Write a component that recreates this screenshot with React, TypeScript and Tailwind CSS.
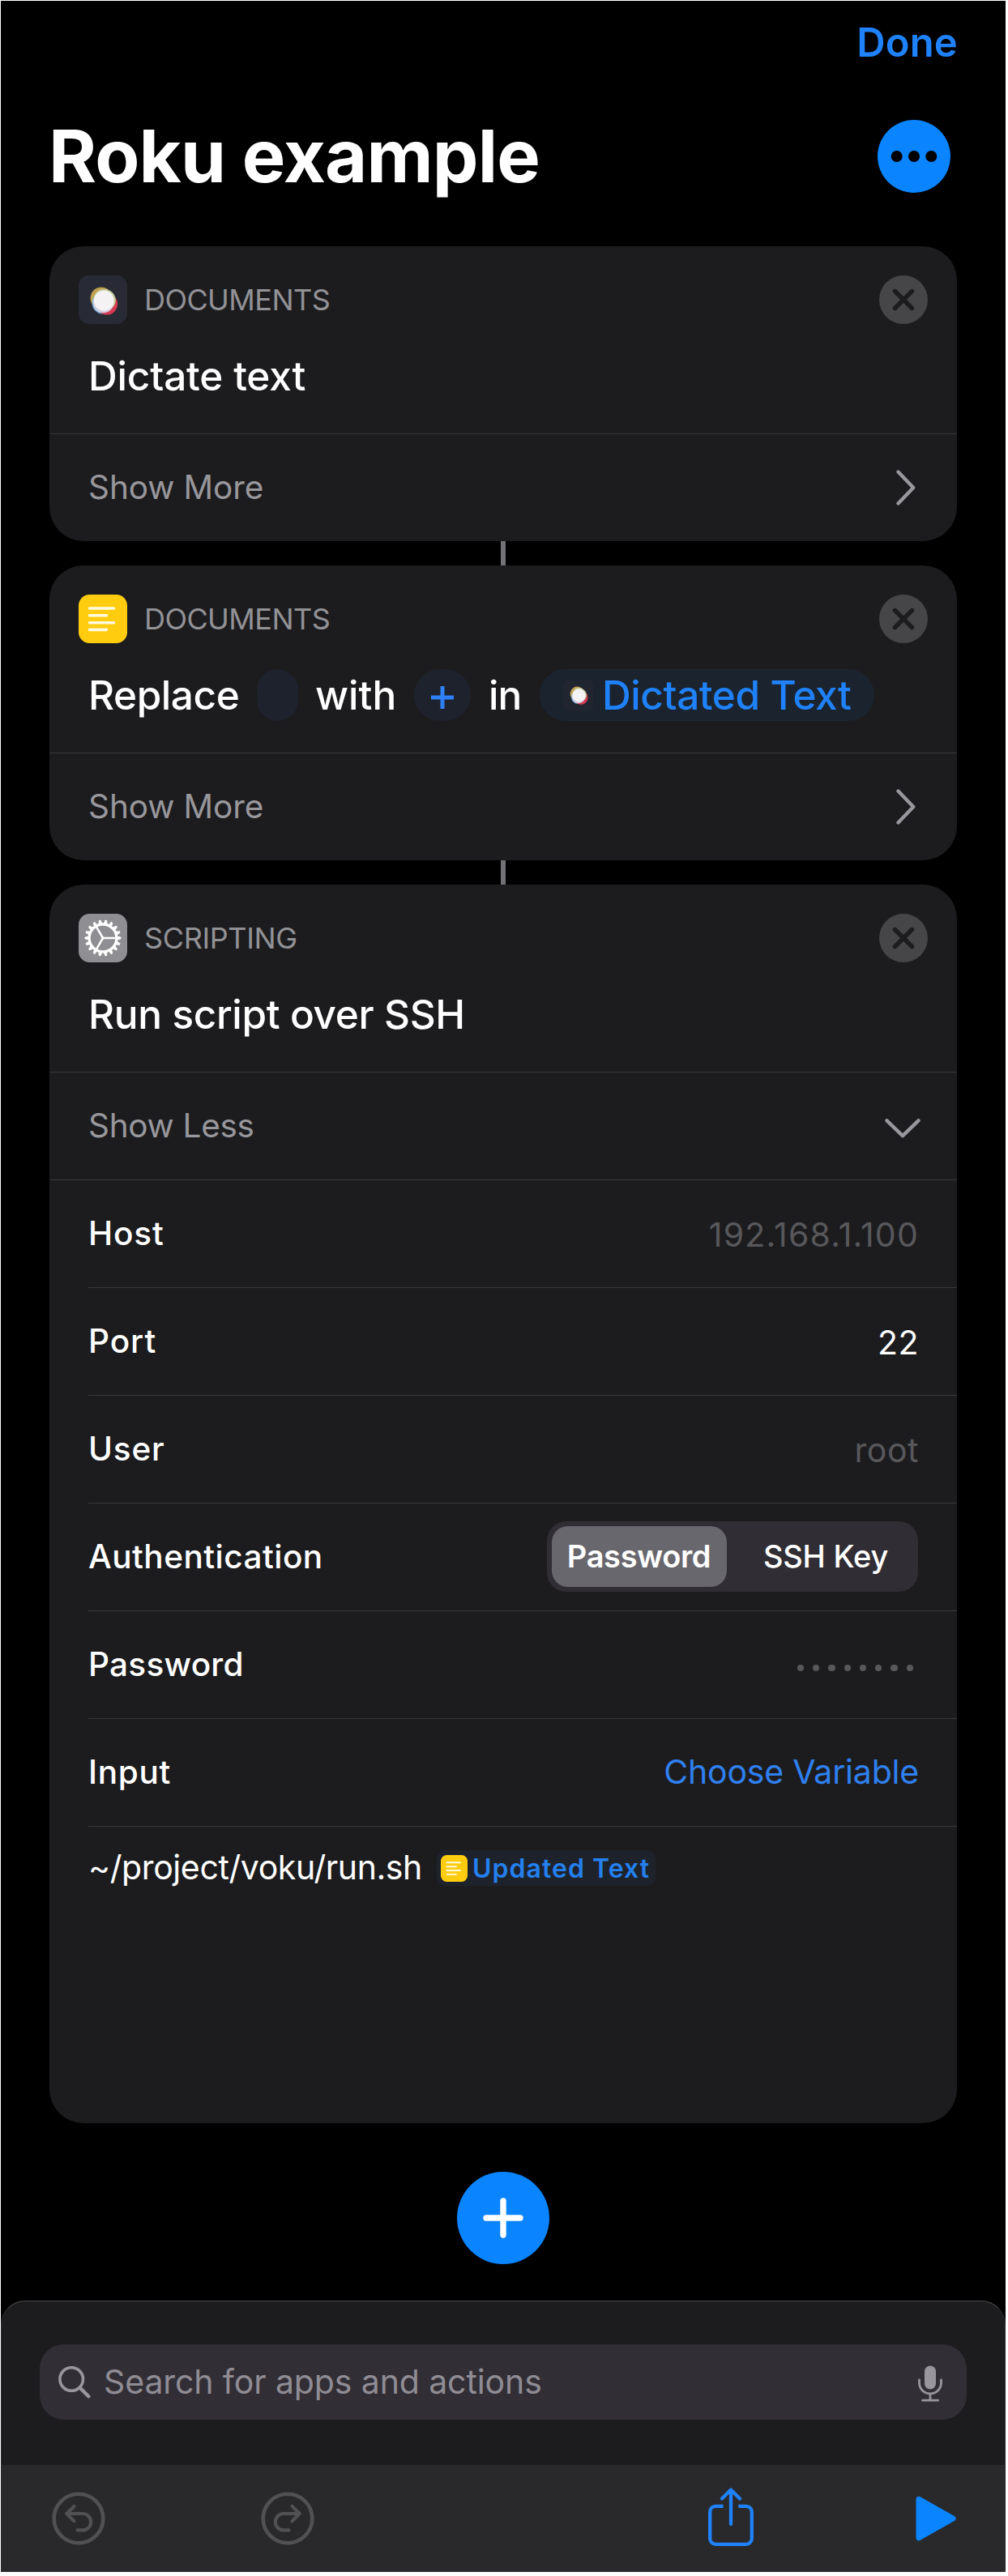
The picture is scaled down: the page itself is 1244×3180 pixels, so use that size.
import type { ReactNode } from "react";

function DictateGlyph({ className }: { className: string }) {
  return (
    <svg viewBox="10 10 38 38" className={className}>
      <ellipse cx="26.8" cy="27" rx="14" ry="14.6" fill="#c0a050" transform="rotate(-30 26.8 27)" />
      <ellipse cx="28.4" cy="32.5" rx="13.6" ry="14" fill="#86b6dc" />
      <ellipse cx="33.8" cy="34" rx="13.3" ry="13.6" fill="#d53a52" />
      <ellipse cx="30.8" cy="28.4" rx="14.2" ry="13.2" fill="#c4cc98" transform="rotate(30 30.8 28.4)" />
      <ellipse cx="29.2" cy="32" rx="13" ry="13.2" fill="#d3cde0" />
      <ellipse cx="29.8" cy="29.6" rx="12.8" ry="12.8" fill="#f4f2f3" />
    </svg>
  );
}

function DictateIcon() {
  return (
    <div className="flex size-[60px] items-center justify-center rounded-[13px] bg-[#282a35]">
      <DictateGlyph className="size-[37px]" />
    </div>
  );
}

function TextIcon({ className }: { className: string }) {
  return (
    <svg viewBox="0 0 60 60" className={className}>
      <rect width="60" height="60" rx="13.5" fill="#ffcc0f" />
      <g stroke="#fffae0" strokeWidth="3.6" strokeLinecap="round">
        <path d="M13.5 17H43.5M13.5 25.8H34.5M13.5 34.7H43.5M13.5 43.4H34.5" />
      </g>
    </svg>
  );
}

const TEETH = Array.from({ length: 18 }, (_, i) => i * 20);

function GearIcon() {
  return (
    <svg viewBox="0 0 60 60" className="size-[60px]">
      <rect width="60" height="60" rx="13.5" fill="#8e8e93" />
      <g transform="translate(30 30)" fill="#fff" stroke="#fff">
        {TEETH.map((a) => (
          <path
            key={a}
            d="M17 -2.1L22 -0.9V0.9L17 2.1Z"
            strokeWidth="1"
            strokeLinejoin="round"
            transform={`rotate(${a})`}
          />
        ))}
        <circle r="16.9" fill="none" strokeWidth="3.2" />
        <path d="M0 0H16M0 0L-8.2 -14.2M0 0L-8.2 14.2" fill="none" strokeWidth="2.5" />
        <circle r="1.8" stroke="none" />
      </g>
    </svg>
  );
}

function CloseIcon() {
  return (
    <svg viewBox="0 0 60 60" className="size-[60px]">
      <circle cx="30" cy="30" r="30" fill="#464648" />
      <path d="M19.5 19.5L40.5 40.5M40.5 19.5L19.5 40.5" stroke="#1c1c1e" strokeWidth="5.4" strokeLinecap="round" />
    </svg>
  );
}

function ChevronRight() {
  return (
    <svg viewBox="0 0 24 44" className="mr-1 h-11 w-6" fill="none">
      <path d="M2.5 2.5L21.2 22L2.5 41.5" stroke="#98979d" strokeWidth="4.4" strokeLinecap="round" strokeLinejoin="round" />
    </svg>
  );
}

function ChevronDown() {
  return (
    <svg viewBox="0 0 44 24" className="mt-1.5 -mr-0.5 h-6 w-11" fill="none">
      <path d="M2.5 2.3L22 21.2L41.5 2.3" stroke="#98979d" strokeWidth="4.4" strokeLinecap="round" strokeLinejoin="round" />
    </svg>
  );
}

type CardProps = {
  icon: ReactNode;
  category: ReactNode;
  title: ReactNode;
  toggle: ReactNode;
  chevron: ReactNode;
  children?: ReactNode;
};

function ActionCard({ icon, category, title, toggle, chevron, children }: CardProps) {
  return (
    <section className="mx-[60px] flex shrink-0 flex-col overflow-hidden rounded-[42px] bg-[#1c1c1e]">
      <div className="flex h-24 items-end justify-between px-9">
        <div className="flex items-center">
          {icon}
          <span className="ml-[21px] text-[36px] leading-[60px] text-[#929296]">{category}</span>
        </div>
        <CloseIcon />
      </div>
      <div className="flex h-[135px] items-center pb-[7px] pl-12 text-[49.5px] font-medium text-white">{title}</div>
      <div className="flex h-[133px] items-center justify-between border-t border-[#39393b] pr-[47px] pl-12">
        <span className="text-[40.5px] text-[#98979c]">{toggle}</span>
        {chevron}
      </div>
      {children}
    </section>
  );
}

function Connector() {
  return <div className="ml-[617px] h-[30px] w-1.5 shrink-0 bg-[#737277]" />;
}

function Row({ label, first, children }: { label: ReactNode; first?: boolean; children: ReactNode }) {
  return (
    <div className={first ? "border-t border-[#39393b] pl-12" : "pl-12"}>
      <div
        className={
          first
            ? "flex h-[132px] items-center justify-between pr-[47px]"
            : "flex h-[133px] items-center justify-between border-t border-[#39393b] pr-[47px]"
        }
      >
        <span className="text-[40.5px] font-medium text-white">{label}</span>
        {children}
      </div>
    </div>
  );
}

function UndoIcon({ flip }: { flip?: boolean }) {
  return (
    <svg viewBox="0 0 66 66" className={flip ? "size-[66px] -scale-x-100" : "size-[66px]"} fill="none" stroke="#515153">
      <circle cx="33" cy="33" r="30.3" strokeWidth="4.6" />
      <path
        d="M27.5 18L18.2 27L27.5 36.2M18.6 27H38a10.2 10.2 0 0 1 0 20.4H31.5"
        strokeWidth="4.2"
        strokeLinecap="round"
        strokeLinejoin="round"
      />
    </svg>
  );
}

export default function App() {
  return (
    <div className="h-[3180px] w-[1244px] bg-white pt-px pr-[3px] pb-[5px] pl-px font-['Inter',sans-serif]">
      <main className="flex h-[3174px] flex-col bg-black">
        <div className="flex h-[103px] items-center justify-end pr-[59px]">
          <span className="text-[49px] font-semibold tracking-[0.17px] text-[#1f82fb]">Done</span>
        </div>
        <header className="mt-[43px] flex h-[91px] items-center justify-between pr-[68px] pl-[59px]">
          <h1 className="text-[90px] leading-[92px] font-bold tracking-[-0.8px] text-white">Roku example</h1>
          <svg viewBox="0 0 90 90" className="size-[90px]">
            <circle cx="45" cy="45" r="45" fill="#0a84ff" />
            <circle cx="23.7" cy="45" r="7" fill="#000" />
            <circle cx="45" cy="45" r="7" fill="#000" />
            <circle cx="66.3" cy="45" r="7" fill="#000" />
          </svg>
        </header>
        <div className="h-[66px] shrink-0" />

        <ActionCard
          icon={<DictateIcon />}
          category={<span className="tracking-[-0.56px]">DOCUMENTS</span>}
          title={<span className="tracking-[-0.18px]">Dictate text</span>}
          toggle={<span className="tracking-[-0.1px]">Show More</span>}
          chevron={<ChevronRight />}
        />
        <Connector />
        <ActionCard
          icon={<TextIcon className="size-[60px]" />}
          category={<span className="tracking-[-0.56px]">DOCUMENTS</span>}
          title={
            <div className="flex items-center">
              <span className="w-[208px] tracking-[-0.42px]">Replace</span>
              <span className="h-16 w-[51px] rounded-full bg-[#1e222c]" />
              <span className="ml-[21px] w-[122px]">with</span>
              <span className="flex h-16 w-[70px] items-center justify-center rounded-full bg-[#1e222c]">
                <svg viewBox="0 0 28 28" className="mt-1.5 size-7">
                  <path d="M0 14H28M14 0V28" stroke="#2f80f7" strokeWidth="5" />
                </svg>
              </span>
              <span className="ml-[22px] w-[63px] tracking-[-1px]">in</span>
              <span className="flex h-16 w-[413px] items-center rounded-full bg-[#1b242e] pl-7">
                <span className="flex h-[39px] w-[39px] items-center justify-center rounded-[9px] bg-[#20252f]">
                  <DictateGlyph className="size-6" />
                </span>
                <span className="ml-2.5 leading-[64px] tracking-[-0.42px] text-[#1f82fb]">Dictated Text</span>
              </span>
            </div>
          }
          toggle={<span className="tracking-[-0.1px]">Show More</span>}
          chevron={<ChevronRight />}
        />
        <Connector />
        <ActionCard
          icon={<GearIcon />}
          category={<span className="tracking-[-0.37px]">SCRIPTING</span>}
          title={<span className="tracking-[-0.36px]">Run script over SSH</span>}
          toggle={<span className="tracking-[-0.29px]">Show Less</span>}
          chevron={<ChevronDown />}
        >
          <Row first label={<span className="tracking-[0.86px]">Host</span>}>
            <span className="pt-[3px] text-[41px] tracking-[1.2px] text-[#58585b]">192.168.1.100</span>
          </Row>
          <Row label={<span className="tracking-[0.95px]">Port</span>}>
            <span className="pt-[3px] text-[41px] tracking-[0.5px] text-white">22</span>
          </Row>
          <Row label={<span className="tracking-[0.81px]">User</span>}>
            <span className="pt-[3px] text-[41px] tracking-[0.53px] text-[#58585b]">root</span>
          </Row>
          <Row label={<span className="tracking-[0.48px]">Authentication</span>}>
            <div className="mr-px mb-0.5 flex h-[87px] w-[458px] items-center rounded-[24px] bg-[#302e34] pl-1.5 text-[38px] text-white">
              <span className="flex h-[75px] w-[216px] items-center justify-center rounded-[20px] bg-[#69676e] pr-px font-semibold tracking-[-0.35px]">
                Password
              </span>
              <span className="flex-1 pl-[8px] text-center font-medium tracking-[-0.21px]">SSH Key</span>
            </div>
          </Row>
          <Row label={<span className="tracking-[0.26px]">Password</span>}>
            <div className="mr-[7px] flex gap-[11px] pt-2">
              {[0, 1, 2, 3, 4, 5, 6, 7].map((i) => (
                <span key={i} className="size-[8.3px] rounded-full bg-[#58585b]" />
              ))}
            </div>
          </Row>
          <Row label={<span className="tracking-[0.68px]">Input</span>}>
            <span className="text-[41px] tracking-[-0.19px] text-[#2f80f0]">Choose Variable</span>
          </Row>
          <div className="pl-12">
            <div className="flex h-[367px] items-start border-t border-[#39393b] pt-6">
              <span className="w-[430px] text-[41px] leading-[52px] tracking-[-0.4px] text-white">~/project/voku/run.sh</span>
              <span className="mt-[5px] flex h-11 w-[270px] items-center rounded-[10px] bg-[#1d222b] pl-[5px]">
                <TextIcon className="size-[33px]" />
                <span className="ml-[6px] pt-0.5 text-[32px] leading-[42px] font-semibold tracking-[1.03px] text-[#2480ee]">
                  Updated Text
                </span>
              </span>
            </div>
          </div>
        </ActionCard>

        <div className="flex h-[219px] shrink-0 items-start justify-center pt-[60px]">
          <svg viewBox="0 0 114 114" className="size-[114px]">
            <circle cx="57" cy="57" r="57" fill="#0a84ff" />
            <path d="M36 57H78M57 36V78" stroke="#fff" strokeWidth="7.4" strokeLinecap="round" />
          </svg>
        </div>

        <div className="flex h-[203px] shrink-0 flex-col rounded-t-[30px] border-t border-r border-l border-t-[#4a4a4c] border-r-[#2a2a2c] border-l-[#2a2a2c] bg-[#1c1c1e] px-[47px] pt-[53px]">
          <div className="flex h-[93px] items-center rounded-[30px] bg-[#312e35] px-[23px]">
            <svg viewBox="0 0 40 40" className="size-10" fill="none" stroke="#98959d" strokeLinecap="round">
              <circle cx="16.2" cy="16" r="14.3" strokeWidth="3.6" />
              <path d="M26.6 26.6L37.3 37.3" strokeWidth="4.4" />
            </svg>
            <span className="ml-4 text-[41px] tracking-[-0.11px] text-[#8f8c94]">Search for apps and actions</span>
            <svg viewBox="0 0 30 45" className="mt-1 mr-[7px] ml-auto h-[45px] w-[30px]" fill="none" stroke="#98959d">
              <rect x="8" y="0.5" width="14" height="29" rx="7" fill="#98959d" stroke="none" />
              <path d="M1.5 18V21.5a13.5 13.5 0 0 0 27 0V18M15 35.5V43M5.5 43.2H24.5" strokeWidth="2.8" strokeLinecap="round" />
            </svg>
          </div>
        </div>

        <footer className="flex h-[132px] shrink-0 items-center bg-[#29292b] pr-[61px] pl-[63px]">
          <UndoIcon />
          <div className="ml-[192px] flex">
            <UndoIcon flip />
          </div>
          <svg viewBox="0 0 56 72" className="mb-1 ml-[486px] h-[72px] w-14" fill="none" stroke="#1f82fb" strokeWidth="4.3">
            <path d="M18.6 22.8H9.2a7 7 0 0 0-7 7V62.8a7 7 0 0 0 7 7H46.8a7 7 0 0 0 7-7V29.8a7 7 0 0 0-7-7H37.4" />
            <path d="M28 3V45M17 13.5L28 2.5L39 13.5" strokeLinecap="round" strokeLinejoin="round" />
          </svg>
          <svg viewBox="0 0 50 56" className="ml-auto h-14 w-[50px]">
            <path d="M4 4.2L46 28L4 51.8Z" fill="#0a84ff" stroke="#0a84ff" strokeWidth="7" strokeLinejoin="round" />
          </svg>
        </footer>
      </main>
    </div>
  );
}
